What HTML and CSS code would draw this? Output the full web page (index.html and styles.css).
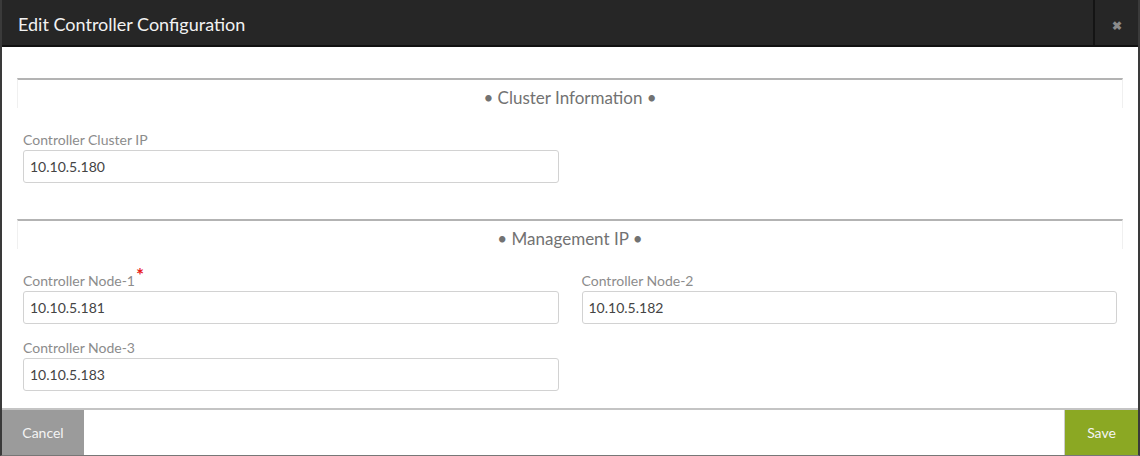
FILE: index.html
```html
<!DOCTYPE html>
<html>
<head>
<meta charset="utf-8">
<link rel="stylesheet" href="styles.css">
</head>
<body>
<div class="modal">
  <div class="modal-header">
    <div class="modal-title">Edit Controller Configuration</div>
    <div class="modal-close">&#x2716;</div>
  </div>
  <div class="modal-body">
    <div class="section">
      <div class="section-head"><span>• Cluster Information •</span></div>
      <div class="fields">
        <div class="field">
          <label class="label">Controller Cluster IP</label>
          <div class="input">10.10.5.180</div>
        </div>
      </div>
    </div>
    <div class="section section-second">
      <div class="section-head"><span>• Management IP •</span></div>
      <div class="fields">
        <div class="field">
          <label class="label">Controller Node-1<span class="req">*</span></label>
          <div class="input">10.10.5.181</div>
        </div>
        <div class="field">
          <label class="label">Controller Node-2</label>
          <div class="input">10.10.5.182</div>
        </div>
        <div class="field">
          <label class="label">Controller Node-3</label>
          <div class="input">10.10.5.183</div>
        </div>
      </div>
    </div>
  </div>
  <div class="modal-footer">
    <button class="btn btn-cancel">Cancel</button>
    <button class="btn btn-save">Save</button>
  </div>
</div>
</body>
</html>
```

FILE: styles.css
```css
* { box-sizing: border-box; }
html, body { margin: 0; padding: 0; background: #fff; }
body { font-family: Lato, "Open Sans", sans-serif; }

.modal {
  width: 1140px;
  height: 456px;
  border-left: 2px solid #3a3a3a;
  border-right: 2px solid #3a3a3a;
  border-bottom: 1px solid #777;
  display: flex;
  flex-direction: column;
  background: #fff;
}

.modal-header {
  height: 47px;
  background: #262626;
  border-bottom: 2px solid #111;
  display: flex;
  align-items: stretch;
}
.modal-title {
  flex: 1;
  color: #f2f2f2;
  font-size: 18px;
  line-height: 48px;
  padding-left: 16px;
}
.modal-close {
  width: 45px;
  border-left: 2px solid #141414;
  color: #8a8a8a;
  font-size: 12px;
  font-weight: bold;
  display: flex;
  align-items: center;
  justify-content: center;
  padding-left: 1px;
  padding-top: 5px;
}

.modal-body {
  flex: 1;
  padding: 31px 15px 0 15px;
}

.section-head {
  border-top: 2px solid #b3b3b3;
  border-left: 1px solid #f0f0f0;
  border-right: 1px solid #f0f0f0;
  height: 30px;
  padding-top: 8px;
  text-align: center;
  color: #727272;
  font-size: 17px;
  line-height: 20px;
}

.fields {
  display: grid;
  grid-template-columns: 1fr 1fr;
  column-gap: 23px;
  row-gap: 16px;
  padding: 0 6px;
  margin-top: 24px;
}

.field { display: flex; flex-direction: column; }

.label {
  color: #8c8c8c;
  font-size: 14px;
  line-height: 16px;
  margin-bottom: 2px;
}
.req {
  color: #e8201c;
  font-size: 19px;
  font-weight: bold;
  line-height: 0;
  position: relative;
  top: -4px;
  margin-left: 1px;
}

.input {
  height: 33px;
  border: 1px solid #d2d2d2;
  border-radius: 3px;
  padding: 0 6px;
  color: #444;
  font-size: 14px;
  line-height: 31px;
}

.section-second { margin-top: 36px; }

.modal-footer {
  height: 47px;
  border-top: 2px solid #c4c4c4;
  display: flex;
  justify-content: space-between;
}
.btn {
  border: none;
  margin: 0;
  font-family: Lato, "Open Sans", sans-serif;
  font-size: 14px;
  color: #f4f4f4;
  cursor: pointer;
}
.btn-cancel {
  width: 82px;
  background: #9b9b9b;
}
.btn-save {
  width: 74px;
  background: #8ba823;
  border-left: 1px solid #ccc;
}
```
